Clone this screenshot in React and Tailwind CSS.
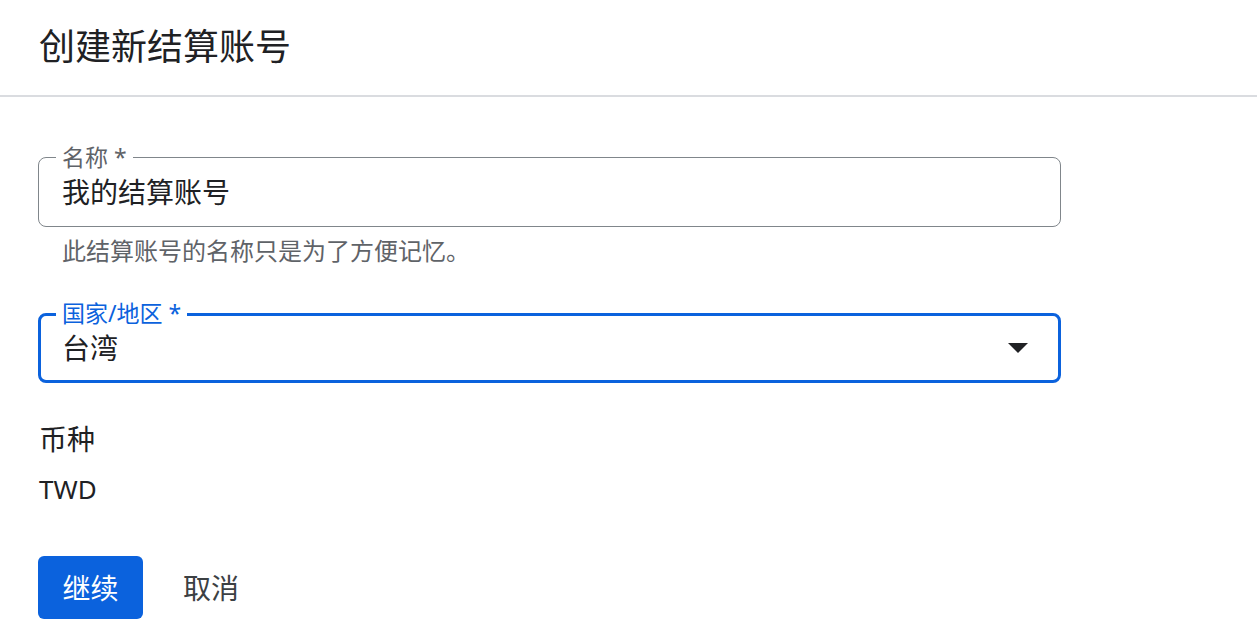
import React from 'react';

const font = { fontFamily: '"Noto Sans", "Noto Sans CJK SC", sans-serif' };

function OutlinedField({ label, value, focused, trailing }) {
  const border = focused ? 'border-[3px] border-[#0b62dd]' : 'border border-[#80868b]';
  const labelColor = focused ? 'text-[#0b62dd]' : 'text-[#5f6368]';
  return (
    <div className={`relative flex h-[70px] w-[1023px] items-center rounded-[8px] ${border}`}>
      <span
        className={`absolute ${focused ? '-top-[14px] left-[15px]' : '-top-[12px] left-[17px]'} bg-white px-[6px] text-[23px] leading-[23px] ${labelColor}`}
      >
        {label}
      </span>
      <span className={`${focused ? 'pl-[21px]' : 'pl-[23px]'} flex-1 text-[28px] leading-[36px] text-[#202124]`}>
        {value}
      </span>
      {trailing}
    </div>
  );
}

export default function App() {
  return (
    <div className="min-h-screen w-full bg-white" style={font}>
      <div className="flex h-[97px] items-center border-b-2 border-[#dadce0] px-[39px] pb-[2px]">
        <h1 className="text-[36px] font-normal leading-[44px] text-[#202124]">创建新结算账号</h1>
      </div>

      <div className="px-[38px]">
        <div className="mt-[60px]">
          <OutlinedField label="名称 *" value="我的结算账号" />
          <p className="mt-[10px] pl-[24px] text-[24px] leading-[28px] text-[#5f6368]">
            此结算账号的名称只是为了方便记忆。
          </p>
        </div>

        <div className="mt-[48px]">
          <OutlinedField
            label="国家/地区 *"
            value="台湾"
            focused
            trailing={
              <svg className="mr-[30px]" width="20" height="10" viewBox="0 0 20 10">
                <path d="M0 0h20L10 10z" fill="#202124" />
              </svg>
            }
          />
        </div>

        <div className="mt-[38px] pl-[1px] text-[#202124]">
          <div className="text-[28px] leading-[36px]">币种</div>
          <div className="mt-[14px] text-[26px] leading-[36px]">TWD</div>
        </div>

        <div className="mt-[49px] flex items-center gap-[18px]">
          <button className="flex h-[63px] w-[105px] items-center justify-center rounded-[6px] bg-[#0b62dd] text-[28px] text-white">
            继续
          </button>
          <button className="flex h-[63px] items-center justify-center px-[22px] text-[28px] text-[#3c4043]">
            取消
          </button>
        </div>
      </div>
    </div>
  );
}
